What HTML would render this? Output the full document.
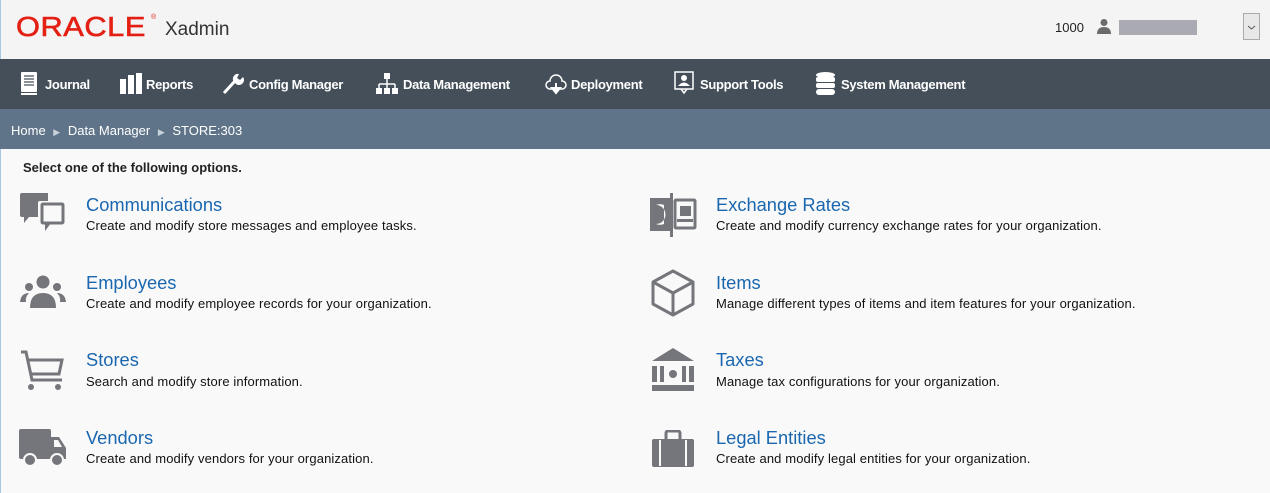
<!DOCTYPE html>
<html><head><style>
*{margin:0;padding:0;box-sizing:border-box}
body{width:1270px;height:493px;overflow:hidden;background:#f9f9f9;font-family:"Liberation Sans",Arial,sans-serif;position:relative}
.hdr{position:absolute;left:0;top:0;width:1270px;height:59px;background:#f4f4f4}
.nav{position:absolute;left:0;top:59px;width:1270px;height:50px;background:#444f59;color:#fff;font-weight:bold;font-size:13px}
.nav span{position:absolute;top:18px;letter-spacing:-0.3px}
.nav svg{position:absolute}
.bc{position:absolute;left:0;top:109px;width:1270px;height:40px;background:#5f7489;color:#fff;font-size:13px}
.t{position:absolute;font-size:18.3px;color:#1a67b0}
.d{position:absolute;font-size:13px;color:#111;letter-spacing:0.12px}
.ic{position:absolute}
</style></head><body>
<div class="hdr">
<div style="position:absolute;left:16px;top:11px;font-size:28px;line-height:32px;color:#e41f13;font-weight:normal;-webkit-text-stroke:0.6px #e41f13;letter-spacing:0.5px;transform:scaleX(1.1);transform-origin:left top">ORACLE</div>
<div style="position:absolute;left:151px;top:14px;font-size:7px;color:#e41f13">®</div>
<div style="position:absolute;left:165px;top:19px;font-size:19px;color:#333">Xadmin</div>
<div style="position:absolute;left:1055px;top:20px;font-size:13px;color:#222">1000</div>
<svg style="position:absolute;left:1096px;top:18px" width="16" height="16" viewBox="0 0 16 16"><circle cx="8" cy="4.5" r="3.5" fill="#6b6b6b"/><path d="M1 16 Q1 9 8 9 Q15 9 15 16Z" fill="#6b6b6b"/></svg>
<div style="position:absolute;left:1119px;top:20px;width:78px;height:15px;background:#aaaab2"></div>
<div style="position:absolute;left:1243px;top:13px;width:17px;height:27px;border:1px solid #aaa;background:#e8e8e8"><svg width="15" height="25" viewBox="0 0 15 25"><path d="M4 12 L7.5 15 L11 12" stroke="#555" fill="none"/></svg></div>
</div>
<div style="position:absolute;left:0;top:0;width:1px;height:493px;background:#a9c6e8"></div>
<div class="nav">
<svg style="left:20px;top:13px" width="18" height="23" viewBox="0 0 18 23"><rect x="1" y="0" width="16" height="20" rx="1" fill="#fff"/><path d="M4 4h10M4 7h10M4 10h10M4 13h10" stroke="#444f59" stroke-width="1.3"/><rect x="1" y="21" width="16" height="2" fill="#fff"/></svg>
<span style="left:45px">Journal</span>
<svg style="left:120px;top:14px" width="22" height="21"><rect x="0" y="6" width="6" height="15" fill="#fff"/><rect x="8" y="2" width="6" height="19" fill="#fff"/><rect x="16" y="0" width="6" height="21" fill="#fff"/></svg>
<span style="left:146px">Reports</span>
<svg style="left:222px;top:13px" width="22" height="23" viewBox="0 0 22 23"><path d="M2 21 L13 9" stroke="#fff" stroke-width="3"/><path d="M12 10 A5 5 0 0 1 17 2 L15 6 L18 8 L21 5 A5 5 0 0 1 13 11Z" fill="#fff"/></svg>
<span style="left:249px">Config Manager</span>
<svg style="left:376px;top:14px" width="22" height="21"><rect x="8" y="0" width="6" height="6" fill="#fff"/><path d="M11 6v5M3 11h16M3 11v4M11 11v4M19 11v4" stroke="#fff" stroke-width="1.5" fill="none"/><rect x="0" y="15" width="6" height="6" fill="#fff"/><rect x="8" y="15" width="6" height="6" fill="#fff"/><rect x="16" y="15" width="6" height="6" fill="#fff"/></svg>
<span style="left:403px">Data Management</span>
<svg style="left:545px;top:15px" width="22" height="21" viewBox="0 0 22 21"><path d="M7 15 H5 A4 4 0 0 1 5 7 A6 6 0 0 1 17 7 A4 4 0 0 1 17 15 H15" stroke="#fff" stroke-width="1.5" fill="none"/><path d="M11 9v8M7 14l4 5 4-5Z" stroke="#fff" stroke-width="2" fill="#fff"/></svg>
<span style="left:571px">Deployment</span>
<svg style="left:674px;top:12px" width="20" height="24"><rect x="1" y="1" width="18" height="17" stroke="#fff" stroke-width="1.5" fill="none"/><circle cx="10" cy="7" r="3" fill="#fff"/><path d="M4 15 Q10 8 16 15Z" fill="#fff"/><path d="M7 18 L10 22 L13 18" stroke="#fff" fill="none" stroke-width="1.5"/></svg>
<span style="left:700px">Support Tools</span>
<svg style="left:816px;top:13px" width="19" height="23"><ellipse cx="9.5" cy="3" rx="9.5" ry="3" fill="#fff"/><rect x="0" y="5" width="19" height="5" rx="2" fill="#fff"/><rect x="0" y="11" width="19" height="5" rx="2" fill="#fff"/><rect x="0" y="17" width="19" height="6" rx="3" fill="#fff"/></svg>
<span style="left:841px">System Management</span>
</div>
<div class="bc"><div style="position:absolute;left:11px;top:14px">Home <span style="color:#c9d1da;font-size:9px;margin:0 4px">▶</span> Data Manager <span style="color:#c9d1da;font-size:9px;margin:0 4px">▶</span> STORE:303</div></div>
<div style="position:absolute;left:23px;top:160px;font-size:13px;font-weight:bold;color:#222">Select one of the following options.</div>

<svg class="ic" style="left:20px;top:193px" width="46" height="44" viewBox="0 0 46 44"><path d="M2 0 H28 V8 H20 A2 2 0 0 0 18 10 V24 H9 L4 30 V24 H2 A2 2 0 0 1 0 22 V2 A2 2 0 0 1 2 0Z" fill="#75767b"/><rect x="22" y="11" width="21" height="19" rx="1" stroke="#75767b" stroke-width="3" fill="none"/><path d="M25 30 L25 38 L31 30Z" fill="#75767b"/></svg>
<div class="t" style="left:86px;top:194px">Communications</div>
<div class="d" style="left:86px;top:218px">Create and modify store messages and employee tasks.</div>

<svg class="ic" style="left:20px;top:275px" width="46" height="36" viewBox="0 0 46 36"><circle cx="23" cy="7" r="6.5" fill="#75767b"/><circle cx="9" cy="12" r="4" fill="#75767b"/><circle cx="37" cy="12" r="4" fill="#75767b"/><path d="M10 33 Q10 18 23 18 Q36 18 36 33Z" fill="#75767b"/><path d="M0 27 Q1 18 9 18 Q5 22 6 27Z M46 27 Q45 18 37 18 Q41 22 40 27Z" fill="#75767b"/></svg>
<div class="t" style="left:86px;top:272px">Employees</div>
<div class="d" style="left:86px;top:296px">Create and modify employee records for your organization.</div>

<svg class="ic" style="left:20px;top:350px" width="46" height="42" viewBox="0 0 46 42"><path d="M1 2 H6 L12 30 H42 M8 10 H42 L39 24 H11" stroke="#75767b" stroke-width="3" fill="none"/><circle cx="11" cy="37" r="3" fill="#75767b"/><circle cx="38" cy="37" r="3" fill="#75767b"/></svg>
<div class="t" style="left:86px;top:349px">Stores</div>
<div class="d" style="left:86px;top:374px">Search and modify store information.</div>

<svg class="ic" style="left:19px;top:429px" width="48" height="38" viewBox="0 0 48 38"><rect x="0" y="0" width="32" height="30" rx="2" fill="#75767b"/><path d="M32 8 H40 L47 19 V30 H32Z" fill="#75767b"/><path d="M35 11 H39 L43 18 H35Z" fill="#f9f9f9"/><circle cx="11" cy="31" r="6" fill="#75767b" stroke="#f9f9f9" stroke-width="2"/><circle cx="38" cy="31" r="6" fill="#75767b" stroke="#f9f9f9" stroke-width="2"/></svg>
<div class="t" style="left:86px;top:427px">Vendors</div>
<div class="d" style="left:86px;top:451px">Create and modify vendors for your organization.</div>

<svg class="ic" style="left:648px;top:193px" width="50" height="44" viewBox="0 0 50 44"><path d="M2 5 H22 V38 H2Z" fill="#75767b"/><path d="M8 12 A10 10 0 0 1 16 12 V31 A10 10 0 0 1 8 31 A9 9 0 0 0 8 12Z" fill="#f9f9f9"/><rect x="22" y="0" width="3" height="44" fill="#75767b"/><rect x="27" y="7" width="20" height="28" rx="1" stroke="#75767b" stroke-width="3" fill="none"/><rect x="32" y="13" width="11" height="10" fill="#75767b"/><rect x="29" y="26" width="16" height="3" fill="#75767b"/></svg>
<div class="t" style="left:716px;top:194px">Exchange Rates</div>
<div class="d" style="left:716px;top:218px">Create and modify currency exchange rates for your organization.</div>

<svg class="ic" style="left:650px;top:269px" width="46" height="48" viewBox="0 0 46 48"><path d="M23 2 L43 13 V35 L23 46 L3 35 V13Z M3 13 L23 24 L43 13 M23 24 V46" stroke="#75767b" stroke-width="3" fill="none" stroke-linejoin="round"/></svg>
<div class="t" style="left:716px;top:272px">Items</div>
<div class="d" style="left:716px;top:296px">Manage different types of items and item features for your organization.</div>

<svg class="ic" style="left:652px;top:348px" width="42" height="44" viewBox="0 0 42 44"><path d="M21 0 L42 13 H0Z" fill="#75767b"/><rect x="0" y="18" width="5" height="16" fill="#75767b"/><rect x="8" y="18" width="4" height="16" fill="#75767b"/><circle cx="21" cy="26" r="4" fill="#75767b"/><rect x="30" y="18" width="4" height="16" fill="#75767b"/><rect x="37" y="18" width="5" height="16" fill="#75767b"/><rect x="0" y="37" width="42" height="6" fill="#75767b"/></svg>
<div class="t" style="left:716px;top:349px">Taxes</div>
<div class="d" style="left:716px;top:374px">Manage tax configurations for your organization.</div>

<svg class="ic" style="left:652px;top:430px" width="42" height="37" viewBox="0 0 42 37"><path d="M14 9 V3 A2 2 0 0 1 16 1 H26 A2 2 0 0 1 28 3 V9" stroke="#75767b" stroke-width="3" fill="none"/><rect x="0" y="9" width="42" height="28" rx="2" fill="#75767b"/><rect x="7" y="10" width="2" height="26" fill="#f9f9f9"/><rect x="33" y="10" width="2" height="26" fill="#f9f9f9"/></svg>
<div class="t" style="left:716px;top:427px">Legal Entities</div>
<div class="d" style="left:716px;top:451px">Create and modify legal entities for your organization.</div>
</body></html>
